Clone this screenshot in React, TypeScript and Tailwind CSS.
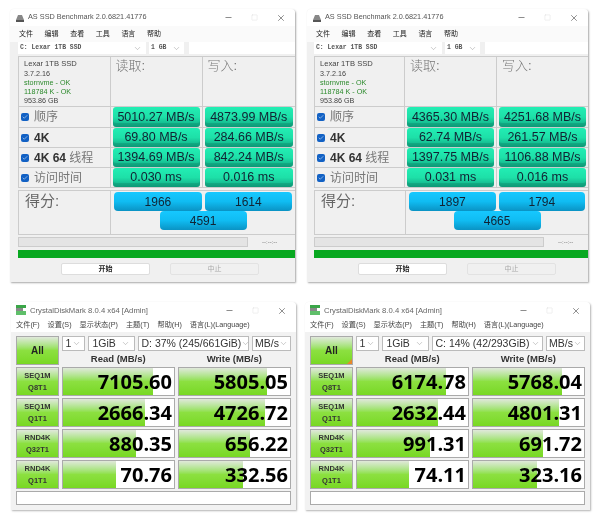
import { Minus, Square, X, ChevronDown, Check } from "lucide-react";

const cjk = "font-['Liberation_Sans','Noto_Sans_CJK_SC',sans-serif]";

const WinButtons = () => (
  <div className="flex items-center gap-[18px] text-[#333]">
    <Minus size={9} strokeWidth={1.5} />
    <Square size={7} strokeWidth={1} className="text-[#ccc]" />
    <X size={10} strokeWidth={1.3} />
  </div>
);

const Select = ({ text, className, mono }: { text: string; className: string; mono?: boolean }) => (
  <div className={`flex items-center justify-between bg-white whitespace-nowrap ${className}`}>
    <span className={mono ? "font-['Liberation_Mono',monospace] text-[6.4px] font-bold text-[#555]" : "text-[10.5px] text-[#333]"}>{text}</span>
    <ChevronDown size={9} strokeWidth={1} className="text-[#777] shrink-0" />
  </div>
);

type AsRow = { label: string; bold?: string; read: string; write: string };

const AsValue = ({ text }: { text: string }) => (
  <div className="flex items-center justify-center h-[20px] mx-[2px] rounded-[3px] bg-gradient-to-b from-[#22eeb4] via-[#1ee0a8] to-[#10a884] text-[12.5px] text-[#123] shadow-[inset_0_-4px_0_rgba(0,80,60,0.18)] whitespace-nowrap">
    {text}
  </div>
);

const Score = ({ text, className = "" }: { text: string; className?: string }) => (
  <div className={`flex items-center justify-center h-[19px] rounded-[4px] bg-gradient-to-b from-[#16c8ff] via-[#10bcf2] to-[#0a93c4] text-[12px] text-[#123] ${className}`}>
    {text}
  </div>
);

const AsSsd = ({
  className,
  inset,
  rows,
  scores,
}: {
  className: string;
  inset: string;
  rows: AsRow[];
  scores: [string, string, string];
}) => (
  <div className={`h-[273px] rounded-t-[4px] bg-[#f0f0f0] shadow-[1px_1px_2px_rgba(0,0,0,0.35)] flex flex-col overflow-hidden ${className}`}>
    <div className="h-[17px] bg-white flex items-center justify-between pl-[5px] pr-[9px] shrink-0">
      <div className="flex items-center gap-[3px] text-[7.3px] text-[#555] whitespace-nowrap">
        <svg width="10" height="8" viewBox="0 0 10 8">
          <path d="M1 6 L3 1 H7 L9 6 Z" fill="#888" />
          <rect x="1" y="6" width="8" height="2" fill="#555" />
        </svg>
        AS SSD Benchmark 2.0.6821.41776
      </div>
      <WinButtons />
    </div>
    <div className="h-[16px] flex items-center gap-[11.6px] pl-[9px] text-[7px] text-[#222] bg-[#fafafa] shrink-0">
      <span>文件</span>
      <span>编辑</span>
      <span>查看</span>
      <span>工具</span>
      <span>语言</span>
      <span>帮助</span>
    </div>
    <div className={`flex h-[12px] gap-[3px] shrink-0 ${inset}`}>
      <Select text="C: Lexar 1TB SSD" mono className="w-[128px] pl-[2px] pr-[4px]" />
      <Select text="1 GB" mono className="w-[35px] pl-[2px] pr-[3px]" />
      <div className="flex-1 ml-[2px] bg-white" />
    </div>
    <div className={`mt-[2px] grid grid-cols-[1fr_92px_1fr] grid-rows-[50px_21px_20px_20px_20px] border-t border-[#ccc] ${inset}`}>
      <div className="border-x border-b border-[#ccc] pl-[5px] pt-[2px] text-[7.2px] leading-[9px] text-[#444] whitespace-nowrap">
        <div className="text-[7.6px] leading-[10px]">Lexar 1TB SSD</div>
        <div>3.7.2.16</div>
        <div className="text-[#2c8a2c]">stornvme - OK</div>
        <div className="text-[#2c8a2c]">118784 K - OK</div>
        <div>953.86 GB</div>
      </div>
      <div className="border-r border-b border-[#ccc] pl-[5px] text-[13px] leading-[18px] font-light text-[#777]">读取:</div>
      <div className="border-b border-[#ccc] pl-[5px] text-[13px] leading-[18px] font-light text-[#777]">写入:</div>
      {rows.map((r) => (
        <div key={r.label + r.read} className="contents">
          <div className="border-x border-b border-[#ccc] flex items-center gap-[5px] pl-[2px] whitespace-nowrap">
            <span className="flex items-center justify-center w-[8px] h-[8px] rounded-[2px] bg-[#1261c4] shrink-0">
              <Check size={6} strokeWidth={2} className="text-white" />
            </span>
            <span className="text-[12px] text-[#777]">
              {r.bold && <b className="font-bold text-[#333]">{r.bold}</b>}
              {r.label}
            </span>
          </div>
          <div className="border-r border-b border-[#ccc] flex flex-col justify-center"><AsValue text={r.read} /></div>
          <div className="border-b border-[#ccc] flex flex-col justify-center"><AsValue text={r.write} /></div>
        </div>
      ))}
    </div>
    <div className={`mt-[2px] h-[45px] grid grid-cols-[33.4%_1fr] border border-r-0 border-[#ccc] shrink-0 ${inset}`}>
      <div className="border-r border-[#ccc] pl-[6px] text-[15px] leading-[20px] text-[#666]">得分:</div>
      <div className="flex flex-col items-center pt-[1px] px-[3px]">
        <div className="flex gap-[3px] w-full">
          <Score text={scores[0]} className="flex-1" />
          <Score text={scores[1]} className="flex-1" />
        </div>
        <Score text={scores[2]} className="w-[87px]" />
      </div>
    </div>
    <div className={`mt-[2px] h-[10px] flex items-center shrink-0 ${inset}`}>
      <div className="w-[230px] h-full bg-[#e4e4e4] border border-[#ccc]" />
      <span className="ml-[14px] text-[6px] text-[#777]">--:--:--</span>
    </div>
    <div className={`mt-[3px] h-[8px] bg-[#08a820] shrink-0 ${inset}`} />
    <div className="flex mt-[5px] pl-[51px] gap-[20px] shrink-0">
      <div className="w-[89px] h-[12px] flex items-center justify-center rounded-[2px] bg-white border border-[#ddd] text-[7px] font-bold text-[#222]">开始</div>
      <div className="w-[89px] h-[12px] flex items-center justify-center rounded-[2px] bg-[#f0f0f0] border border-[#e2e2e2] text-[7px] text-[#aaa]">中止</div>
    </div>
  </div>
);

const cdmGreen = "bg-gradient-to-b from-[#e0e8da] via-[#8ce040] to-[#78d822]";

const Bar = ({ value, pct }: { value: string; pct: number }) => (
  <div className="relative h-[29px] bg-white border border-[#aaa] overflow-hidden">
    <div className={`absolute inset-y-0 left-0 ${cdmGreen}`} style={{ width: `${pct}%` }} />
    <span className="relative block text-right pr-[2px] text-[20px] leading-[27px] font-bold text-black font-['Open_Sans',sans-serif]">{value}</span>
  </div>
);

type CdmRow = { a: string; b: string; read: string; readPct: number; write: string; writePct: number };

const Cdm = ({ className, drive, rows, corner }: { className: string; drive: string; rows: CdmRow[]; corner?: boolean }) => (
  <div className={`h-[208px] rounded-t-[4px] bg-[#f2f2f2] shadow-[1px_1px_2px_rgba(0,0,0,0.3)] flex flex-col overflow-hidden ${className}`}>
    <div className="h-[17px] bg-white flex items-center justify-between pl-[5px] pr-[9px] shrink-0">
      <div className="flex items-center gap-[4px] text-[7.7px] text-[#666] whitespace-nowrap">
        <svg width="10" height="10" viewBox="0 0 10 10">
          <rect x="0" y="0" width="10" height="3" fill="#3aa648" />
          <rect x="0" y="3" width="7" height="3" fill="#888" />
          <rect x="0" y="6" width="10" height="4" fill="#5fbf6a" />
        </svg>
        CrystalDiskMark 8.0.4 x64 [Admin]
      </div>
      <WinButtons />
    </div>
    <div className="h-[13px] flex items-center gap-[8px] pl-[5px] text-[7.2px] text-[#444] bg-white shrink-0 whitespace-nowrap">
      <span>文件(F)</span>
      <span>设置(S)</span>
      <span>显示状态(P)</span>
      <span>主题(T)</span>
      <span>帮助(H)</span>
      <span>语言(L)(Language)</span>
    </div>
    <div className="px-[5px] pt-[4px] grid grid-cols-[43px_minmax(0,1fr)_minmax(0,1fr)] gap-x-[2.5px] gap-y-[2px]">
      <div className={`relative row-span-2 flex items-center justify-center border border-[#aaa] ${cdmGreen} text-[10px] font-bold text-[#222]`}>
        All
        {corner && <span className="absolute right-0 bottom-0 w-0 h-0 border-l-[5px] border-b-[5px] border-l-transparent border-b-[#e8872a]" />}
      </div>
      <div className="col-span-2 flex gap-[3px] h-[15px] min-w-0 text-[#444]">
        <Select text="1" className="w-[23px] shrink-0 border border-[#bbb] px-[3px]" />
        <Select text="1GiB" className="w-[47px] shrink-0 border border-[#bbb] px-[4px]" />
        <Select text={drive} className="flex-1 min-w-0 border border-[#bbb] pl-[3px] pr-[2px]" />
        <Select text="MB/s" className="w-[39px] shrink-0 border border-[#bbb] px-[2px]" />
      </div>
      <div className="text-center text-[9.5px] font-bold text-[#333] leading-[12px]">Read (MB/s)</div>
      <div className="text-center text-[9.5px] font-bold text-[#333] leading-[12px]">Write (MB/s)</div>
      {rows.map((r) => (
        <div key={r.a + r.b} className="contents">
          <div className={`h-[29px] flex flex-col items-center justify-center border border-[#aaa] ${cdmGreen} text-[7.5px] leading-[12px] font-bold text-[#333]`}>
            <span>{r.a}</span>
            <span>{r.b}</span>
          </div>
          <Bar value={r.read} pct={r.readPct} />
          <Bar value={r.write} pct={r.writePct} />
        </div>
      ))}
      <div className="col-span-3 h-[14px] bg-white border border-[#aaa]" />
    </div>
  </div>
);

export default function App() {
  return (
    <div className={`w-[600px] h-[519px] bg-white overflow-hidden blur-[0.3px] ${cjk}`}>
      <div className="flex pt-[9px]">
        <AsSsd
          className="ml-[10px] w-[285px]"
          inset="ml-[8px]"
          scores={["1966", "1614", "4591"]}
          rows={[
            { label: "顺序", read: "5010.27 MB/s", write: "4873.99 MB/s" },
            { label: "", bold: "4K", read: "69.80 MB/s", write: "284.66 MB/s" },
            { label: " 线程", bold: "4K 64", read: "1394.69 MB/s", write: "842.24 MB/s" },
            { label: "访问时间", read: "0.030 ms", write: "0.016 ms" },
          ]}
        />
        <AsSsd
          className="ml-[12px] w-[281px]"
          inset="ml-[7px]"
          scores={["1897", "1794", "4665"]}
          rows={[
            { label: "顺序", read: "4365.30 MB/s", write: "4251.68 MB/s" },
            { label: "", bold: "4K", read: "62.74 MB/s", write: "261.57 MB/s" },
            { label: " 线程", bold: "4K 64", read: "1397.75 MB/s", write: "1106.88 MB/s" },
            { label: "访问时间", read: "0.031 ms", write: "0.016 ms" },
          ]}
        />
      </div>
      <div className="flex mt-[20px]">
        <Cdm
          className="ml-[11px] w-[285px]"
          drive="D: 37% (245/661GiB)"
          rows={[
            { a: "SEQ1M", b: "Q8T1", read: "7105.60", readPct: 81, write: "5805.05", writePct: 79 },
            { a: "SEQ1M", b: "Q1T1", read: "2666.34", readPct: 74, write: "4726.72", writePct: 78 },
            { a: "RND4K", b: "Q32T1", read: "880.35", readPct: 66, write: "656.22", writePct: 64 },
            { a: "RND4K", b: "Q1T1", read: "70.76", readPct: 48, write: "332.56", writePct: 58 },
          ]}
        />
        <Cdm
          className="ml-[9px] w-[285px]"
          corner
          drive="C: 14% (42/293GiB)"
          rows={[
            { a: "SEQ1M", b: "Q8T1", read: "6174.78", readPct: 80, write: "5768.04", writePct: 80 },
            { a: "SEQ1M", b: "Q1T1", read: "2632.44", readPct: 73, write: "4801.31", writePct: 78 },
            { a: "RND4K", b: "Q32T1", read: "991.31", readPct: 66, write: "691.72", writePct: 63 },
            { a: "RND4K", b: "Q1T1", read: "74.11", readPct: 47, write: "323.16", writePct: 58 },
          ]}
        />
      </div>
    </div>
  );
}
